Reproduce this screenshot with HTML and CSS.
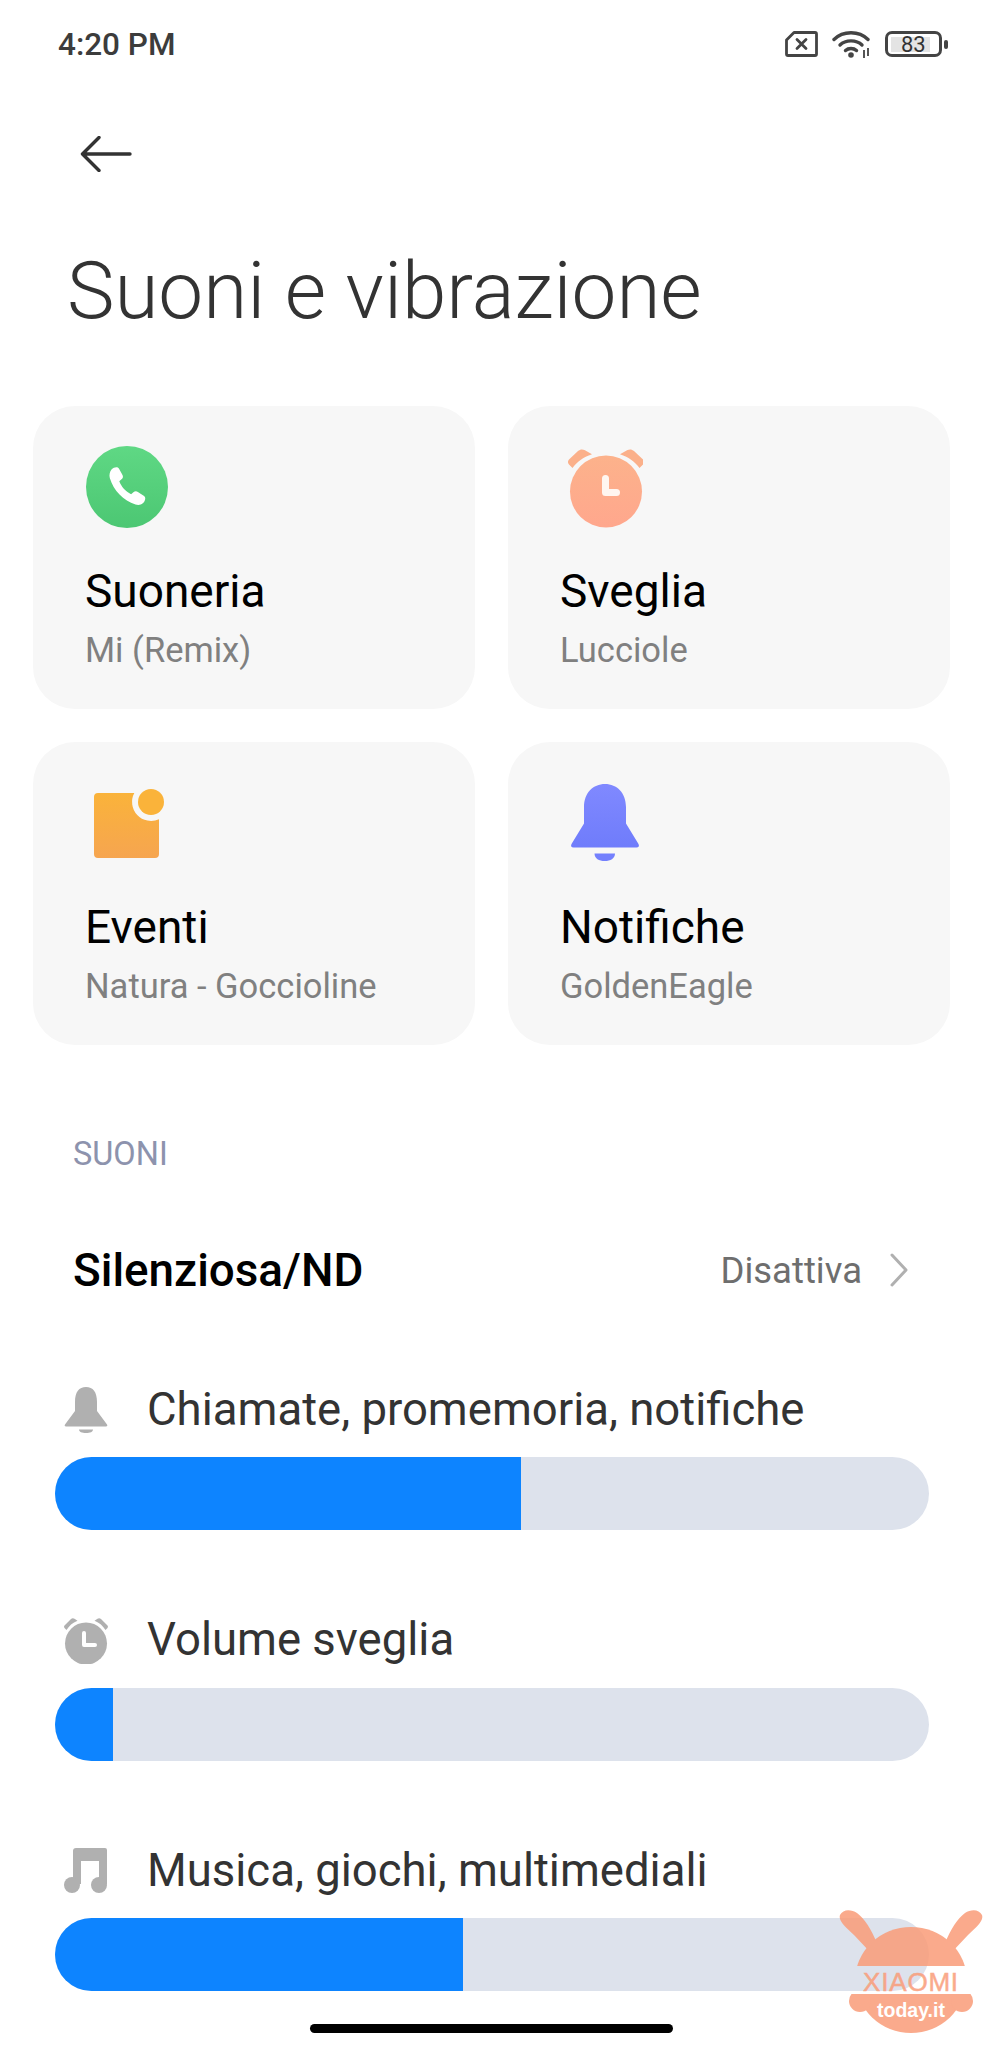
FILE: index.html
```html
<!DOCTYPE html>
<html lang="it">
<head>
<meta charset="utf-8">
<title>Suoni e vibrazione</title>
<link rel="stylesheet" href="styles.css">
</head>
<body>
<main class="screen">
  <header class="status">
    <span class="clock">4:20 PM</span>
    <div class="status-icons">
      <svg class="sim" viewBox="0 0 33 26" width="33" height="26"><path d="M9 1.500H30a1.500 1.500 0 0 1 1.500 1.500V23a1.500 1.500 0 0 1-1.500 1.500H3A1.500 1.500 0 0 1 1.500 23V9Z" fill="none" stroke="#444" stroke-width="2.800" stroke-linejoin="round"/><path d="M12 8.500l9 9M21 8.500l-9 9" stroke="#444" stroke-width="2.800" stroke-linecap="round"/></svg>
      <svg class="wifi" viewBox="0 0 40 28" width="40" height="28"><g fill="none" stroke="#444" stroke-width="3.400" stroke-linecap="round"><path d="M2 9.500C11 .5 27 .5 36 9.500"/><path d="M8 15C13.500 9.500 24.500 9.500 30 15"/><path d="M13.500 20.500C16.500 17.800 21.500 17.800 24.500 20.500"/></g><circle cx="19" cy="25" r="2.800" fill="#444"/><path d="M32 20v8M36 18v8" stroke="#444" stroke-width="1.800"/></svg>
      <div class="battery"><span class="battery-level">83</span></div>
      <span class="battery-nub"></span>
    </div>
  </header>

  <nav class="back">
    <svg viewBox="0 0 52 36" width="52" height="36"><path d="M50 18H3M19 1.500 2.500 18 19 34.500" fill="none" stroke="#333" stroke-width="3.400" stroke-linecap="round" stroke-linejoin="round"/></svg>
  </nav>

  <h1 class="title">Suoni e vibrazione</h1>

  <section class="cards">
    <article class="card">
      <div class="card-icon">
        <svg viewBox="0 0 82 82" width="82" height="82"><defs><linearGradient id="g1" x1="0" y1="0" x2="0" y2="1"><stop offset="0" stop-color="#5fd884"/><stop offset="1" stop-color="#4cc773"/></linearGradient></defs><circle cx="41" cy="41" r="41" fill="url(#g1)"/><path d="M25.500 23.500c2.500-2.600 6-3.200 7.400-1l3.600 6.400c.9 1.700.4 3.200-1 4.400l-2.200 1.900c1.900 5.300 6.300 10.200 11.800 13l2.300-2c1.300-1.100 3-1.300 4.500-.3l6.200 4.100c2 1.500 1.300 5-1.300 7.300-2 1.700-4.700 2-7.300 1.100C37.500 55 27.500 44.500 23.800 32c-.8-3 0-6.400 1.700-8.500Z" fill="#fff"/></svg>
      </div>
      <h2 class="card-title">Suoneria</h2>
      <p class="card-sub">Mi (Remix)</p>
    </article>
    <article class="card">
      <div class="card-icon">
        <svg viewBox="-3 0 82 82" width="82" height="82"><defs><linearGradient id="g2" x1="0" y1="0" x2="0" y2="1"><stop offset="0" stop-color="#fcb28b"/><stop offset="1" stop-color="#ffa78d"/></linearGradient></defs><circle cx="42" cy="45.500" r="36" fill="url(#g2)"/><path d="M5 13.500 14 5c2-1.800 4.500-2 6.500-.9L28 8.200C19 11 13 16 8.500 22L5 18.500c-1.400-1.400-1.400-3.600 0-5ZM79 13.500 70 5c-2-1.800-4.500-2-6.500-.9L56 8.200C65 11 71 16 75.500 22L79 18.500c1.400-1.400 1.400-3.600 0-5Z" fill="#fbb08a"/><path d="M41.500 32.500v14h11" fill="none" stroke="#fff6f0" stroke-width="7" stroke-linecap="round" stroke-linejoin="round"/></svg>
      </div>
      <h2 class="card-title">Sveglia</h2>
      <p class="card-sub">Lucciole</p>
    </article>
    <article class="card">
      <div class="card-icon">
        <svg viewBox="0 -5 82 82" width="82" height="82"><defs><linearGradient id="g3" x1="0" y1="0" x2="0" y2="1"><stop offset="0" stop-color="#fab33a"/><stop offset="1" stop-color="#f6a550"/></linearGradient></defs><path d="M12 6H48.300A19 19 0 0 0 73 32.200V67a4 4 0 0 1-4 4H12a4 4 0 0 1-4-4V10a4 4 0 0 1 4-4Z" fill="url(#g3)"/><circle cx="65" cy="15" r="13" fill="#fab33a"/></svg>
      </div>
      <h2 class="card-title">Eventi</h2>
      <p class="card-sub">Natura - Goccioline</p>
    </article>
    <article class="card">
      <div class="card-icon">
        <svg viewBox="-5 0 82 82" width="82" height="82"><defs><linearGradient id="g4" x1="0" y1="0" x2="0" y2="1"><stop offset="0" stop-color="#8089ff"/><stop offset="1" stop-color="#6f7cfb"/></linearGradient></defs><path d="M18 25C18 11 27 2 39 2S60 11 60 25V41.500L72.500 62c1 2 .3 3.500-2 3.500H7.500c-2.300 0-3-1.500-2-3.500L18 41.500Z" fill="url(#g4)"/><path d="M28.500 71.500H49c0 5-4.500 7.500-10.300 7.500S28.500 76.500 28.500 71.500Z" fill="#7480fd"/></svg>
      </div>
      <h2 class="card-title">Notifiche</h2>
      <p class="card-sub">GoldenEagle</p>
    </article>
  </section>

  <h3 class="section-label">SUONI</h3>

  <div class="dnd-row">
    <span class="dnd-name">Silenziosa/ND</span>
    <span class="dnd-value">Disattiva</span>
    <svg class="chevron" viewBox="0 0 20 34" width="20" height="34"><path d="M3 2l14 15L3 32" fill="none" stroke="#b0b0b0" stroke-width="3" stroke-linecap="round" stroke-linejoin="round"/></svg>
  </div>

  <section class="volumes">
    <div class="volume">
      <div class="volume-head">
        <svg viewBox="0 0 46 48" width="46" height="48"><path d="M12 17C12 7 16 2 23 2s11 5 11 15v9l10 13.500c.7 1.200.2 2-1 2H3c-1.200 0-1.700-.8-1-2L12 26Z" fill="#b0b0b0"/><path d="M16 44.500h14c0 2.500-3 3.500-7 3.500s-7-1-7-3.500Z" fill="#b0b0b0"/></svg>
        <span class="volume-name">Chiamate, promemoria, notifiche</span>
      </div>
      <div class="track"><div class="fill" style="width:466px"></div></div>
    </div>
    <div class="volume">
      <div class="volume-head">
        <svg viewBox="0 0 46 48" width="46" height="48"><circle cx="23" cy="27.500" r="21" fill="#b0b0b0"/><path d="M1.500 9.500 8 3c1-1 2.500-1 3.500-.3l3 2C9.500 6.500 6 10 3.500 14L1.500 12c-.6-.8-.6-1.800 0-2.500ZM44.500 9.500 38 3c-1-1-2.500-1-3.500-.3l-3 2C36.500 6.500 40 10 42.500 14L44.500 12c.6-.8.6-1.800 0-2.500Z" fill="#b0b0b0"/><path d="M21 17v12h11" fill="none" stroke="#fff" stroke-width="4" stroke-linecap="round" stroke-linejoin="round"/></svg>
        <span class="volume-name">Volume sveglia</span>
      </div>
      <div class="track"><div class="fill" style="width:58px"></div></div>
    </div>
    <div class="volume">
      <div class="volume-head">
        <svg viewBox="0 0 46 48" width="46" height="48"><path d="M13 2H42a2 2 0 0 1 2 2V38h-8V15H18V38h-8V5a3 3 0 0 1 3-3Z" fill="#b0b0b0"/><circle cx="9" cy="39" r="8" fill="#b0b0b0"/><circle cx="36" cy="39" r="8" fill="#b0b0b0"/></svg>
        <span class="volume-name">Musica, giochi, multimediali</span>
      </div>
      <div class="track"><div class="fill" style="width:408px"></div></div>
    </div>
  </section>

  <div class="home-bar"></div>

  <svg class="watermark" viewBox="0 0 146 124" width="146" height="124">
    <defs>
      <clipPath id="wm-top"><rect x="0" y="0" width="146" height="56"/></clipPath>
      <clipPath id="wm-bottom"><rect x="0" y="84" width="146" height="40"/></clipPath>
    </defs>
    <g class="wm-shape">
      <path d="M32 42 16 25C8 17 0 11 2 5 5-1 13-1 19 3 27 9 33 19 39 33Z"/>
      <path d="M114 42 130 25C138 17 146 11 144 5 141-1 133-1 127 3 119 9 113 19 107 33Z"/>
      <ellipse cx="73" cy="71" rx="56" ry="54" clip-path="url(#wm-top)"/>
      <g clip-path="url(#wm-bottom)">
        <ellipse cx="73" cy="70" rx="55" ry="53"/>
        <circle cx="22" cy="91" r="11"/>
        <circle cx="124" cy="91" r="11"/>
      </g>
      <text class="wm-brand" x="73" y="81" text-anchor="middle">XIAOMI</text>
      <text class="wm-site" x="73" y="107" text-anchor="middle">today.it</text>
    </g>
  </svg>
</main>
</body>
</html>
```

FILE: styles.css
```css
* { box-sizing: border-box; }
html, body { margin: 0; padding: 0; background: #fff; }
body { font-family: Roboto, "Noto Sans", sans-serif; }
.screen { position: relative; width: 984px; height: 2048px; overflow: hidden; background: #fff; }

.status { display: flex; justify-content: space-between; align-items: center; height: 86px; padding: 2px 36px 0 58px; }
.clock { font-size: 31.5px; font-weight: 500; color: #3c3c3c; }
.status-icons { display: flex; align-items: center; }
.sim { margin-right: 14px; }
.wifi { margin-right: 13px; }
.battery { display: flex; align-items: center; width: 57px; height: 26px; padding: 0 0 0 3px; border: 3px solid #444; border-radius: 7px; }
.battery-level { display: block; width: 39px; padding-left: 10px; background: #e4e4e4; color: #333; font-size: 22px; line-height: 15px; height: 15px; letter-spacing: -0.2px; }
.battery-nub { display: block; width: 4px; height: 9px; margin-left: 2px; border-radius: 2px; background: #444; }

.back { display: flex; height: 36px; margin: 50px 0 0 80px; }

.title { margin: 72px 0 0 67px; font-size: 80px; line-height: 94px; font-weight: 300; color: #333; letter-spacing: 0; }

.cards { display: grid; grid-template-columns: 442px 442px; grid-auto-rows: 303px; gap: 33px 33px; margin: 68px 0 0 33px; }
.card { padding: 40px 0 0 52px; border-radius: 42px; background: #f7f7f7; }
.card-icon { height: 82px; margin-left: 1px; }
.card-title { margin: 37px 0 0; font-size: 46px; line-height: 52px; font-weight: 400; color: #000; }
.card-sub { margin: 11px 0 0; font-size: 34.5px; line-height: 44px; font-weight: 400; color: #808080; }

.section-label { margin: 91px 0 0 73px; font-size: 32.5px; line-height: 36px; font-weight: 400; color: #8d93ad; }

.dnd-row { display: flex; align-items: center; height: 60px; margin: 68px 0 0 73px; padding-right: 75px; }
.dnd-name { flex: 1; font-size: 45.8px; font-weight: 500; color: #000; }
.dnd-value { margin-right: 27px; font-size: 36.5px; color: #6e6e6e; }

.volumes { display: flex; flex-direction: column; gap: 79.5px; margin: 79px 0 0 55px; width: 874px; }
.volume-head { display: flex; align-items: center; height: 60px; margin-bottom: 18px; }
.volume-head svg { margin: 0 0 0 8px; }
.volume-name { margin-left: 38px; font-size: 45.5px; color: #333; }
.track { height: 73px; border-radius: 37px; overflow: hidden; background: #dde2ec; }
.fill { height: 100%; background: #0d84ff; }

.home-bar { position: absolute; left: 310px; top: 2024px; width: 363px; height: 9px; border-radius: 5px; background: #000; }

.watermark { position: absolute; left: 838px; top: 1910px; }
.wm-shape { fill: #fa9c78; opacity: .85; }
.wm-brand { font-family: "Liberation Sans", sans-serif; font-size: 26px; font-weight: 400; letter-spacing: .8px; stroke: #fa9c78; stroke-width: .5px; }
.wm-site { fill: #fff; font-family: "Liberation Sans", sans-serif; font-size: 19.5px; font-weight: 700; }
```
